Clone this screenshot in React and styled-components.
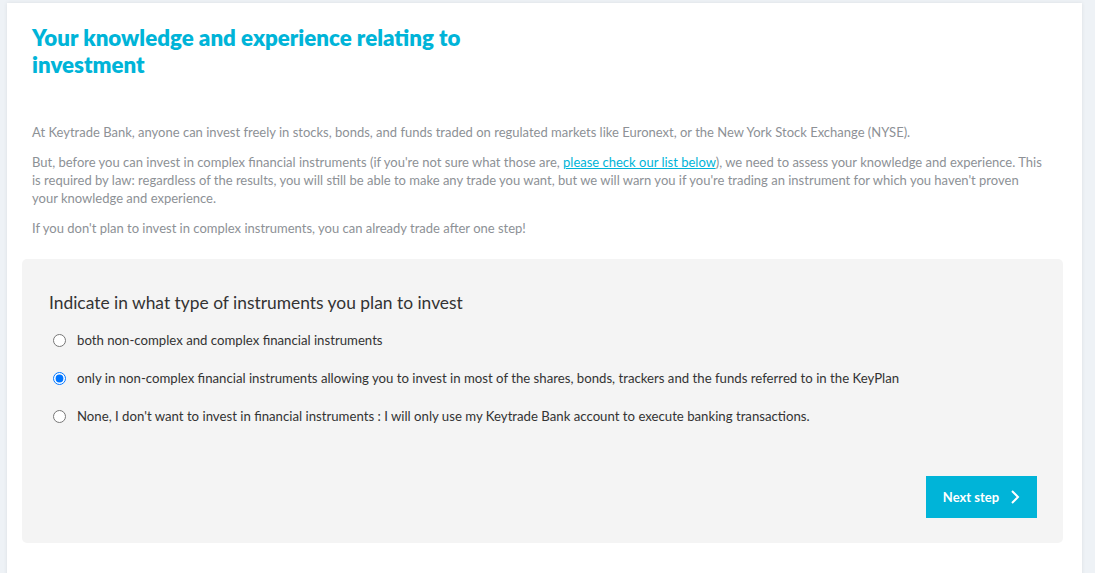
import styled, { createGlobalStyle } from "styled-components";

const GlobalStyle = createGlobalStyle`
  html, body {
    margin: 0;
    padding: 0;
    background: #eef2f6;
    font-family: Lato, "Open Sans", sans-serif;
  }
  * { box-sizing: border-box; }
`;

const options = [
  { id: "both", label: "both non-complex and complex financial instruments" },
  {
    id: "noncomplex",
    label:
      "only in non-complex financial instruments allowing you to invest in most of the shares, bonds, trackers and the funds referred to in the KeyPlan"
  },
  {
    id: "none",
    label:
      "None, I don't want to invest in financial instruments : I will only use my Keytrade Bank account to execute banking transactions."
  }
];

const App = () => {
  return (
    <>
      <GlobalStyle />
      <Page>
        <Card>
          <Title>Your knowledge and experience relating to investment</Title>
          <Intro>
            <Text>
              At Keytrade Bank, anyone can invest freely in stocks, bonds, and funds traded on
              regulated markets like Euronext, or the New York Stock Exchange (NYSE).
            </Text>
            <Text>
              But, before you can invest in complex financial instruments (if you're not sure what
              those are, <Link href="#">please check our list below</Link>), we need to assess
              your knowledge and experience. This is required by law: regardless of the results,
              you will still be able to make any trade you want, but we will warn you if you're
              trading an instrument for which you haven't proven your knowledge and experience.
            </Text>
            <Text>
              If you don't plan to invest in complex instruments, you can already trade after one
              step!
            </Text>
          </Intro>
          <FormBox>
            <Question>Indicate in what type of instruments you plan to invest</Question>
            <OptionList>
              {options.map((o) => (
                <Option key={o.id}>
                  <Radio
                    type="radio"
                    name="instruments"
                    value={o.id}
                    defaultChecked={o.id === "noncomplex"}
                  />
                  <span>{o.label}</span>
                </Option>
              ))}
            </OptionList>
            <Actions>
              <NextButton type="button">
                Next step
                <svg width="10" height="16" viewBox="0 0 10 16" fill="none">
                  <path d="M2 2l6 6-6 6" stroke="#fff" strokeWidth="2" />
                </svg>
              </NextButton>
            </Actions>
          </FormBox>
        </Card>
      </Page>
    </>
  );
};

export default App;

const Page = styled.div`
  padding: 3px 13px 0 7px;
  height: 573px;
  overflow: hidden;
`;

const Card = styled.div`
  background: #ffffff;
  box-shadow: 0 0 4px rgba(0, 0, 0, 0.08);
  padding: 21px 19px 40px 15px;
  min-height: 600px;
`;

const Title = styled.h1`
  margin: 0 0 0 10px;
  max-width: 460px;
  font-size: 22.3px;
  line-height: 27px;
  font-weight: 800;
  color: #00b4d8;
`;

const Intro = styled.div`
  margin: 45px 18px 0 10px;
  display: flex;
  flex-direction: column;
  gap: 12px;
`;

const Text = styled.p`
  margin: 0;
  font-size: 13px;
  line-height: 18px;
  color: #8d9196;
`;

const Link = styled.a`
  color: #00b4d8;
  text-decoration: underline;
`;

const FormBox = styled.div`
  margin-top: 22px;
  background: #f4f4f4;
  border-radius: 5px;
  padding: 33px 26px 25px 27px;
`;

const Question = styled.h2`
  margin: 0;
  font-size: 17.4px;
  line-height: 22px;
  font-weight: 400;
  color: #333333;
`;

const OptionList = styled.div`
  margin-top: 17px;
  display: flex;
  flex-direction: column;
  gap: 20px;
`;

const Option = styled.label`
  display: flex;
  align-items: center;
  gap: 11px;
  font-size: 13.2px;
  line-height: 18px;
  color: #333333;
  padding-left: 4px;
`;

const Radio = styled.input`
  margin: 0;
  width: 13px;
  height: 13px;
`;

const Actions = styled.div`
  margin-top: 51px;
  display: flex;
  justify-content: flex-end;
`;

const NextButton = styled.button`
  display: flex;
  align-items: center;
  gap: 11px;
  height: 42px;
  width: 111px;
  justify-content: center;
  border: none;
  border-radius: 0;
  background: #00b4d8;
  color: #ffffff;
  font-family: Lato, sans-serif;
  font-size: 13px;
  font-weight: 700;
  cursor: pointer;
`;
